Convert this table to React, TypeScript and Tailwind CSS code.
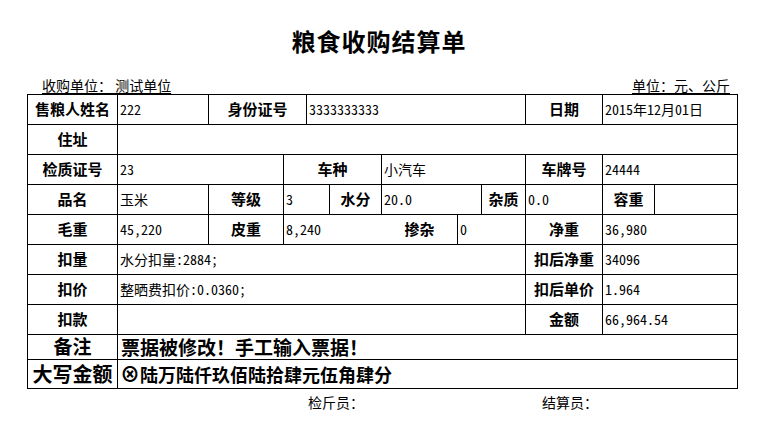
import React from 'react';

const cjk = '"Noto Sans CJK SC", "Noto Sans", sans-serif';
const mono = '"Noto Sans Mono CJK SC", "Noto Sans CJK SC", monospace';

type CellProps = {
  span?: number;
  label?: boolean;
  noRight?: boolean;
  className?: string;
  children?: React.ReactNode;
};

function Cell({ span = 1, label, noRight, className = '', children }: CellProps) {
  const spans: Record<number, string> = {
    1: 'col-span-1',
    2: 'col-span-2',
    3: 'col-span-3',
    5: 'col-span-5',
    8: 'col-span-8',
    11: 'col-span-11',
  };
  return (
    <div
      className={`${spans[span]} border-b border-black ${noRight ? '' : 'border-r'} flex items-center whitespace-nowrap ${
        label ? 'justify-center font-bold text-[15px]' : 'pl-[2px] text-[14px]'
      } ${className}`}
      style={label ? undefined : { fontFamily: mono }}
    >
      {children}
    </div>
  );
}

export default function App() {
  return (
    <div className="w-[758px] h-[429px] bg-white text-black" style={{ fontFamily: cjk }}>
      {/* Title */}
      <div className="pt-[26px] h-[56px] text-center text-[24px] font-bold leading-[30px] tracking-[1px]">
        粮食收购结算单
      </div>

      {/* Unit line */}
      <div className="ml-[27px] w-[711px] h-[38px] flex items-end justify-between pl-[15px] pr-[8px] text-[14px] leading-[18px]">
        <div>
          <span className="underline underline-offset-2">收购单位：</span>
          <span className="underline underline-offset-2"> 测试单位</span>
        </div>
        <div className="underline underline-offset-2">单位：元、公斤</div>
      </div>

      {/* Form table */}
      <div className="ml-[27px] w-[711px] border-l border-t border-black grid grid-cols-[90px_91px_75px_23px_23px_52px_76px_24px_44px_77px_52px_83px] grid-rows-[repeat(8,30px)_25px_29px]">
        <Cell label>售粮人姓名</Cell>
        <Cell>222</Cell>
        <Cell label span={2}>身份证号</Cell>
        <Cell span={5}>3333333333</Cell>
        <Cell label>日期</Cell>
        <Cell span={2}>2015年12月01日</Cell>

        <Cell label>住址</Cell>
        <Cell span={11} />

        <Cell label>检质证号</Cell>
        <Cell span={2}>23</Cell>
        <Cell label span={3}>车种</Cell>
        <Cell span={3}>小汽车</Cell>
        <Cell label>车牌号</Cell>
        <Cell span={2}>24444</Cell>

        <Cell label>品名</Cell>
        <Cell>玉米</Cell>
        <Cell label>等级</Cell>
        <Cell span={2}>3</Cell>
        <Cell label>水分</Cell>
        <Cell span={2}>20.0</Cell>
        <Cell label>杂质</Cell>
        <Cell>0.0</Cell>
        <Cell label>容重</Cell>
        <Cell />

        <Cell label>毛重</Cell>
        <Cell>45,220</Cell>
        <Cell label>皮重</Cell>
        <Cell span={3} noRight>8,240</Cell>
        <Cell label>掺杂</Cell>
        <Cell span={2}>0</Cell>
        <Cell label>净重</Cell>
        <Cell span={2}>36,980</Cell>

        <Cell label>扣量</Cell>
        <Cell span={8}>水分扣量:2884;</Cell>
        <Cell label>扣后净重</Cell>
        <Cell span={2}>34096</Cell>

        <Cell label>扣价</Cell>
        <Cell span={8}>整晒费扣价:0.0360;</Cell>
        <Cell label>扣后单价</Cell>
        <Cell span={2}>1.964</Cell>

        <Cell label>扣款</Cell>
        <Cell span={8} />
        <Cell label>金额</Cell>
        <Cell span={2}>66,964.54</Cell>

        <Cell label className="!text-[19px] !leading-[20px] pb-[2px]">备注</Cell>
        <Cell span={11} className="!text-[19px] !leading-[20px] font-bold !pl-[3px]">
          <span style={{ fontFamily: cjk }}>票据被修改！手工输入票据！</span>
        </Cell>

        <Cell label className="!text-[20px] !leading-[22px]">大写金额</Cell>
        <Cell span={11} className="!text-[18px] !leading-[22px] font-bold !pl-[2px]">
          <span style={{ fontFamily: cjk }}>
            <span className="text-[20px]">⊗</span>陆万陆仟玖佰陆拾肆元伍角肆分
          </span>
        </Cell>
      </div>

      {/* Signatures */}
      <div className="flex mt-[3px] text-[14px] leading-[20px]">
        <div className="ml-[308px] w-[234px]">检斤员：</div>
        <div>结算员：</div>
      </div>
    </div>
  );
}
